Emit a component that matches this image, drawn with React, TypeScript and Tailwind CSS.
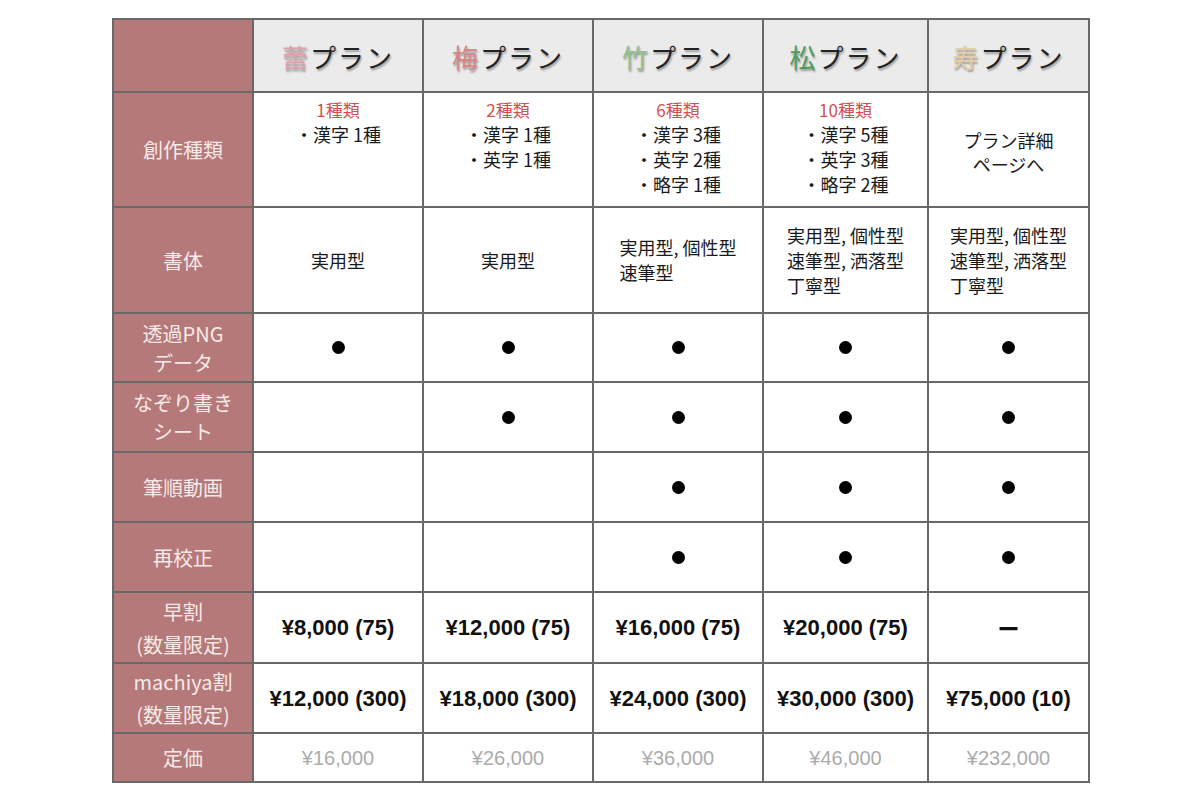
import React from "react";

const JP = "font-['Noto_Sans_CJK_JP','Noto_Sans',sans-serif]";
const LAT = "font-['Liberation_Sans',Arial,'Noto_Sans_CJK_JP',sans-serif]";

const Dot = () => <div className="w-[13px] h-[13px] rounded-full bg-black" />;

const Label = ({ lines, cls = "" }: { lines: string[]; cls?: string }) => (
  <div
    className={`bg-[#b47978] text-[#f7e9e8] text-[20px] leading-[29px] flex flex-col items-center justify-center text-center font-['Noto_Sans_CJK_JP','Noto_Sans',sans-serif] ${cls}`}
  >
    {lines.map((l, i) => (
      <div key={i}>{l}</div>
    ))}
  </div>
);

const Cell = ({ children, cls = "" }: { children?: React.ReactNode; cls?: string }) => (
  <div className={`bg-white flex flex-col items-center justify-center text-[#1a1a1a] ${cls}`}>{children}</div>
);

const plans = [
  { k: "蕾", c: "text-[#dba2ab]" },
  { k: "梅", c: "text-[#d98584]" },
  { k: "竹", c: "text-[#93c28e]" },
  { k: "松", c: "text-[#4f9d5c]" },
  { k: "寿", c: "text-[#e3cda8]" },
];

const kinds: { red: string; items: string[] }[] = [
  { red: "1種類", items: ["・漢字 1種"] },
  { red: "2種類", items: ["・漢字 1種", "・英字 1種"] },
  { red: "6種類", items: ["・漢字 3種", "・英字 2種", "・略字 1種"] },
  { red: "10種類", items: ["・漢字 5種", "・英字 3種", "・略字 2種"] },
];

const styles: string[][] = [
  ["実用型"],
  ["実用型"],
  ["実用型, 個性型", "速筆型"],
  ["実用型, 個性型", "速筆型, 洒落型", "丁寧型"],
  ["実用型, 個性型", "速筆型, 洒落型", "丁寧型"],
];

const dots: boolean[][] = [
  [true, true, true, true, true],
  [false, true, true, true, true],
  [false, false, true, true, true],
  [false, false, true, true, true],
];

const early = ["¥8,000 (75)", "¥12,000 (75)", "¥16,000 (75)", "¥20,000 (75)", "ー"];
const machiya = ["¥12,000 (300)", "¥18,000 (300)", "¥24,000 (300)", "¥30,000 (300)", "¥75,000 (10)"];
const list = ["¥16,000", "¥26,000", "¥36,000", "¥46,000", "¥232,000"];

export default function App() {
  return (
    <div className="w-[1200px] h-[800px] bg-white pt-[18px] pl-[112px]">
      <div className="grid w-fit bg-[#686868] gap-[2px] p-[2px] grid-cols-[138px_168px_168px_168px_163px_159px] grid-rows-[71px_113px_104px_67px_68px_68px_68px_69px_68px_47px]">
        {/* header */}
        <div className="bg-[#b47978]" />
        {plans.map((p, i) => (
          <div
            key={i}
            className={`bg-[#ebebeb] flex items-center justify-center text-[26px] font-normal text-[#222] tracking-[2px] pt-[2px] [text-shadow:1px_2px_2px_rgba(0,0,0,0.35)] ${JP}`}
          >
            <span className={p.c}>{p.k}</span>
            <span>プラン</span>
          </div>
        ))}

        {/* 創作種類 */}
        <Label lines={["創作種類"]} />
        {kinds.map((k, i) => (
          <div
            key={i}
            className={`bg-white flex flex-col items-center pt-[4px] text-[18px] leading-[25px] text-[#1a1a1a] ${JP}`}
          >
            <div className="text-[#cf5151] text-[17px]">{k.red}</div>
            {k.items.map((t, j) => (
              <div key={j}>{t}</div>
            ))}
          </div>
        ))}
        <Cell cls={`text-[18px] leading-[24px] pt-[4px] ${JP}`}>
          <div>プラン詳細</div>
          <div>ページへ</div>
        </Cell>

        {/* 書体 */}
        <Label lines={["書体"]} />
        {styles.map((s, i) => (
          <Cell key={i} cls={`text-[18px] leading-[25px] ${JP}`}>
            <div className="text-left">
              {s.map((t, j) => (
                <div key={j}>{t}</div>
              ))}
            </div>
          </Cell>
        ))}

        {/* dots rows */}
        {[
          ["透過PNG", "データ"],
          ["なぞり書き", "シート"],
          ["筆順動画"],
          ["再校正"],
        ].map((lab, r) => (
          <React.Fragment key={r}>
            <Label lines={lab} />
            {dots[r].map((d, i) => (
              <Cell key={i}>{d ? <Dot /> : null}</Cell>
            ))}
          </React.Fragment>
        ))}

        {/* 早割 */}
        <Label lines={["早割", "(数量限定)"]} cls="leading-[33px]" />
        {early.map((t, i) => (
          <Cell key={i} cls={`text-[22px] font-bold text-[#111] ${i === 4 ? JP : LAT}`}>
            <div>{t}</div>
          </Cell>
        ))}

        {/* machiya割 */}
        <Label lines={["machiya割", "(数量限定)"]} cls="leading-[33px]" />
        {machiya.map((t, i) => (
          <Cell key={i} cls={`text-[22px] font-bold text-[#111] ${LAT}`}>
            <div>{t}</div>
          </Cell>
        ))}

        {/* 定価 */}
        <Label lines={["定価"]} />
        {list.map((t, i) => (
          <Cell key={i} cls={`text-[20px] text-[#ababab] ${LAT}`}>
            <div>{t}</div>
          </Cell>
        ))}
      </div>
    </div>
  );
}
